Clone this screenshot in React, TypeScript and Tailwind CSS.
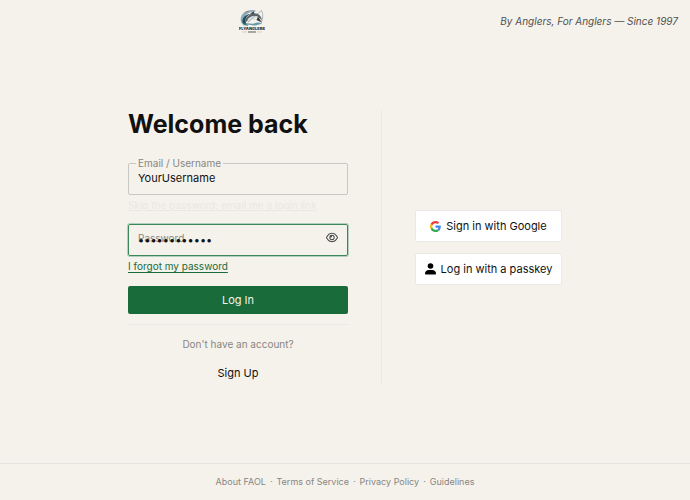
import { useState } from 'react';

const footerLinks = ['About FAOL', 'Terms of Service', 'Privacy Policy', 'Guidelines'];

function Logo() {
  return (
    <svg viewBox="0 0 52 50" className="h-[25px] w-[26px]" role="img" aria-label="FlyAnglers">
      <path d="M9 33C0 25 2 11 13 6c9-5 19-5 24-1C25 3 13 9 11 19c-1 6 2 10 7 14z" fill="#86aabc" />
      <path d="M7 27c-1-9 6-16 15-17-6 4-9 8-9 13 0 4 2 7 5 10-5 0-9-2-11-6z" fill="#28495b" />
      <path d="M14 19C20 9 29 6 38 10c5 3 7 7 8 12l-9-7c-9-2-14 1-17 7l-8 5z" fill="#58646a" />
      <path d="M17 21c6-7 13-9 22-4l-9 1 8 5-12-2-8 6z" fill="#dce3e3" />
      <path d="M22 9 31 4l-2 6zM38 15l8 12-11-5z" fill="#343a3c" />
      <path d="M18 26 45 3c4 8 3 18-2 27" fill="none" stroke="#667780" strokeWidth="1" />
      <path d="M9 30c8-4 14 1 21-1 6-3 11-3 16 1-7 0-10 4-17 3-7-2-13 0-20-3z" fill="#6598ad" />
      <path d="M11 7 19 4" stroke="#a98466" strokeWidth="2" />
      <text x="26" y="42" textAnchor="middle" fontSize="8" fontWeight="800" fontFamily="Inter, sans-serif" fill="#202427">
        FLYANGLERS
      </text>
      <path d="M6 46h10m20 0h10" stroke="#c4a078" strokeWidth="1" />
      <path d="M18 46h16" stroke="#5c5c59" strokeWidth="2" />
    </svg>
  );
}

function GoogleIcon() {
  return (
    <svg viewBox="0 0 48 48" className="size-[11px]" aria-hidden="true">
      <path fill="#EA4335" d="M24 9.5c3.54 0 6.71 1.22 9.21 3.6l6.85-6.85C35.9 2.38 30.47 0 24 0 14.62 0 6.51 5.38 2.56 13.22l7.98 6.19C12.43 13.72 17.74 9.5 24 9.5z" />
      <path fill="#4285F4" d="M46.98 24.55c0-1.57-.15-3.09-.38-4.55H24v9.02h12.94c-.58 2.96-2.26 5.48-4.78 7.18l7.73 6c4.51-4.18 7.09-10.36 7.09-17.65z" />
      <path fill="#FBBC05" d="M10.53 28.59c-.48-1.45-.76-2.99-.76-4.59s.27-3.14.76-4.59l-7.98-6.19C.92 16.46 0 20.12 0 24s.92 7.54 2.56 10.78l7.97-6.19z" />
      <path fill="#34A853" d="M24 48c6.48 0 11.93-2.13 15.89-5.81l-7.73-6c-2.15 1.45-4.92 2.3-8.16 2.3-6.26 0-11.57-4.22-13.47-9.91l-7.98 6.19C6.51 42.62 14.62 48 24 48z" />
    </svg>
  );
}

function UserIcon() {
  return (
    <svg viewBox="0 0 11 12" className="h-3 w-[11px]" aria-hidden="true">
      <circle cx="5.5" cy="3" r="2.8" />
      <path d="M0 10.5C0 8.3 1.7 7 3.8 7h3.4C9.3 7 11 8.3 11 10.5c0 .7-.3 1-1 1H1c-.7 0-1-.3-1-1z" />
    </svg>
  );
}

function EyeIcon() {
  return (
    <svg viewBox="0 0 576 512" className="h-[11px] w-3" fill="#47484a" aria-hidden="true">
      <path d="M288 80c-65 0-119 30-159 67-39 36-66 79-79 109 13 30 40 73 79 109 40 37 94 67 159 67s119-30 159-67c39-36 66-79 79-109-13-30-40-73-79-109-40-37-94-67-159-67zM95 112c47-43 112-80 193-80s146 37 193 80c46 43 78 95 93 132 3 8 3 16 0 24-15 37-47 89-93 132-47 43-112 80-193 80S142 443 95 400C49 357 17 305 2 268c-3-8-3-16 0-24 15-37 47-89 93-132zM288 336c44 0 80-36 80-80s-36-80-80-80h-2c1 5 2 11 2 16 0 35-29 64-64 64-5 0-11-1-16-2v2c0 44 36 80 80 80zm0-208a128 128 0 1 1 0 256 128 128 0 1 1 0-256z" />
    </svg>
  );
}

export default function App() {
  const [username, setUsername] = useState('YourUsername');
  const [password, setPassword] = useState('flyfishing97');
  const [visible, setVisible] = useState(false);

  return (
    <div className="flex min-h-screen flex-col bg-[#f5f2eb] font-['Inter',sans-serif] text-[11px] text-[#111]">
      <header className="flex h-[43px] items-center justify-between pr-3 pl-[239px]">
        <a href="#home">
          <Logo />
        </a>
        <p className="text-[10px] text-[#505050] italic">By Anglers, For Anglers — Since 1997</p>
      </header>

      <main className="flex flex-1 items-start justify-center pt-[67px] pb-10">
        <form className="w-[254px] border-r border-[#ebe9e6] pr-[33px]" onSubmit={(e) => e.preventDefault()}>
          <h1 className="text-[25px] leading-7 font-bold">Welcome back</h1>

          <div className="relative mt-[25px]">
            <input
              id="username"
              value={username}
              onChange={(e) => setUsername(e.target.value)}
              className="block h-8 w-full rounded-xs border border-[#c9c7c3] bg-transparent px-[9px] pb-0.5 text-[11px] outline-none"
            />
            <label htmlFor="username" className="absolute -top-2 left-2 bg-[#f5f2eb] px-0.5 text-[10px] leading-4 text-[#888682]">
              Email / Username
            </label>
          </div>
          <a href="#email-login" className="mt-[2px] block text-[10px] leading-4 text-[#e9e7e3] underline">
            Skip the password; email me a login link
          </a>

          <div className="relative mt-[11px]">
            <label htmlFor="password" className="absolute top-[6px] left-[10px] text-[10px] leading-4 text-[#888682]">
              Password
            </label>
            <input
              id="password"
              type={visible ? 'text' : 'password'}
              value={password}
              onChange={(e) => setPassword(e.target.value)}
              className="relative block h-8 w-full rounded-xs border border-[#3b865a] bg-transparent pr-8 pl-[9px] text-[11px] ring-1 ring-[#b5cfbe] outline-none"
            />
            <button
              type="button"
              aria-label="Toggle password visibility"
              onClick={() => setVisible(!visible)}
              className="absolute top-2 right-[10px]"
            >
              <EyeIcon />
            </button>
          </div>
          <a href="#forgot" className="mt-[2px] block text-[10px] leading-4 text-[#1a6b3a] underline underline-offset-2">
            I forgot my password
          </a>

          <button type="submit" className="mt-3 block h-7 w-full rounded-xs bg-[#1a6b3a] text-[11px] text-[#f5f2eb]">
            Log In
          </button>

          <div className="mt-[10px] flex flex-col items-center border-t border-[#ebe9e6] pt-[11px]">
            <p className="text-[10px] leading-4 text-[#888682]">Don't have an account?</p>
            <button type="button" className="mt-[9px] h-6 px-3">
              Sign Up
            </button>
          </div>
        </form>

        <div className="mt-[100px] ml-[33px] flex w-[147px] flex-col gap-[11px]">
          <button type="button" className="flex h-8 items-center justify-center gap-[5px] rounded-xs border border-[#ebe9e6] bg-white whitespace-nowrap">
            <GoogleIcon />
            Sign in with Google
          </button>
          <button type="button" className="flex h-8 items-center justify-center gap-[5px] rounded-xs border border-[#ebe9e6] bg-white whitespace-nowrap">
            <UserIcon />
            Log in with a passkey
          </button>
        </div>
      </main>

      <footer className="flex h-[37px] items-center justify-center gap-1 border-t border-[#e5e2dd] text-[9px] text-[#888682]">
        {footerLinks.map((link, i) => (
          <span key={link} className="flex gap-1">
            {i > 0 && <span>·</span>}
            <a href="#footer">{link}</a>
          </span>
        ))}
      </footer>
    </div>
  );
}
